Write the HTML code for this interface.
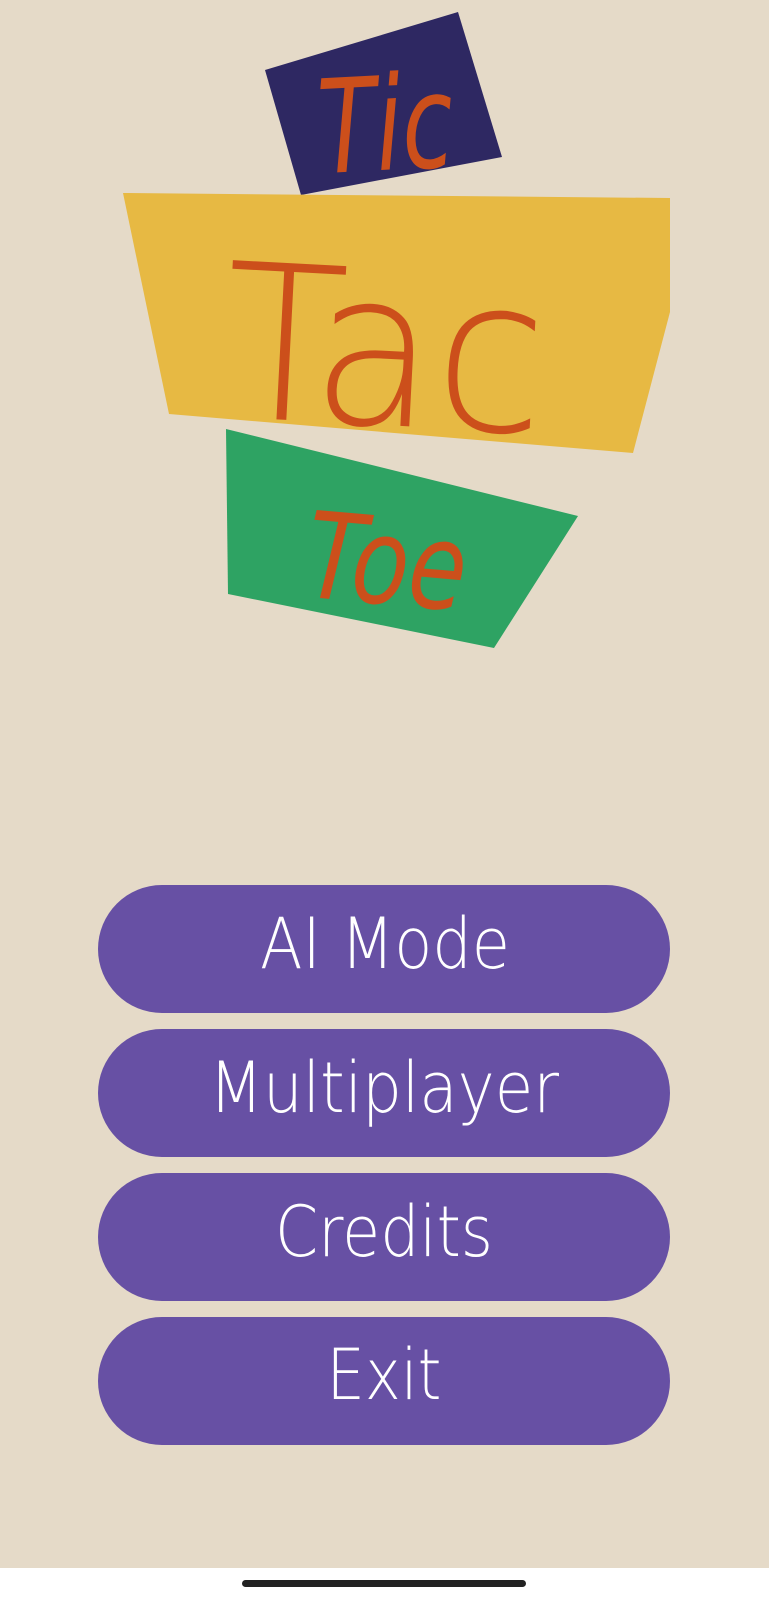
<!DOCTYPE html>
<html><head><meta charset="utf-8"><style>
html,body{margin:0;padding:0;background:#e5dac8;}
body{width:769px;height:1600px;position:relative;overflow:hidden;}
svg{position:absolute;left:0;top:0;}
</style></head><body>
<svg width="769" height="1600" viewBox="0 0 769 1600">
<rect width="769" height="1600" fill="#e5dac8"/>
<polygon points="265,70 458,12 502,157 301,195" fill="#2e2862"/>
<polygon points="123,193 670,198 670,312 633,453 169,414" fill="#e7b943"/>
<polygon points="226,429 578,516 494,648 228,594" fill="#2ea363"/>
<g font-family="DejaVu Sans, Liberation Sans, sans-serif" font-weight="200" fill="#cc4f1b">
<text x="318" y="170" font-size="130" font-style="italic" textLength="135" lengthAdjust="spacingAndGlyphs" transform="rotate(-3 380 120)">Tic</text>
<text x="224" y="425" font-size="215" textLength="322" lengthAdjust="spacingAndGlyphs" transform="rotate(3 385 350)">Tac</text>
<text x="308" y="604" font-size="120" font-style="italic" textLength="160" lengthAdjust="spacingAndGlyphs" transform="rotate(5 390 550)">Toe</text>
</g>
<g fill="#6750a4">
<rect x="98" y="885" width="572" height="128" rx="64"/>
<rect x="98" y="1029" width="572" height="128" rx="64"/>
<rect x="98" y="1173" width="572" height="128" rx="64"/>
<rect x="98" y="1317" width="572" height="128" rx="64"/>
</g>
<g font-family="DejaVu Sans, Liberation Sans, sans-serif" font-weight="200" fill="#fff" font-size="70" text-anchor="middle">
<text x="385" y="968" textLength="250" lengthAdjust="spacingAndGlyphs">AI Mode</text>
<text x="384" y="1112" textLength="350" lengthAdjust="spacingAndGlyphs">Multiplayer</text>
<text x="384" y="1256" textLength="218" lengthAdjust="spacingAndGlyphs">Credits</text>
<text x="384" y="1399" textLength="115" lengthAdjust="spacingAndGlyphs">Exit</text>
</g>
<rect x="0" y="1568" width="769" height="32" fill="#fff"/>
<rect x="242" y="1580" width="284" height="7" rx="3.5" fill="#222"/>
</svg>
</body></html>
